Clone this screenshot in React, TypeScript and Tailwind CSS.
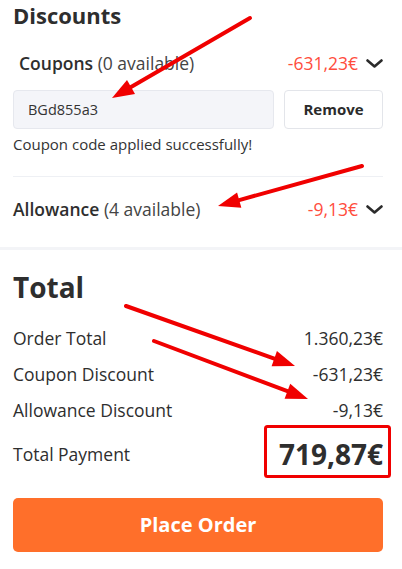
import { FC } from 'react';

const Chevron: FC = () => (
  <svg width="17" height="9" viewBox="0 0 17 9" className="shrink-0">
    <polyline points="1.5,1.5 8.5,7.5 15.5,1.5" fill="none" stroke="#2b2b2b" strokeWidth="2.6" strokeLinecap="round" strokeLinejoin="round" />
  </svg>
);

const Arrow: FC<{ x1: number; y1: number; x2: number; y2: number }> = ({ x1, y1, x2, y2 }) => {
  const a = Math.atan2(y2 - y1, x2 - x1);
  const len = 22;
  const w = 8;
  const bx = x2 - Math.cos(a) * len;
  const by = y2 - Math.sin(a) * len;
  const p1 = `${bx + Math.sin(a) * w},${by - Math.cos(a) * w}`;
  const p2 = `${bx - Math.sin(a) * w},${by + Math.cos(a) * w}`;
  return (
    <g>
      <line x1={x1} y1={y1} x2={bx} y2={by} stroke="#f00000" strokeWidth="4" strokeLinecap="round" />
      <polygon points={`${x2},${y2} ${p1} ${p2}`} fill="#f00000" />
    </g>
  );
};

const SummaryRow: FC<{ label: string; value: string }> = ({ label, value }) => (
  <div className="flex items-center justify-between h-[36px] text-[17.5px]">
    <span>{label}</span>
    <span>{value}</span>
  </div>
);

export default function App() {
  return (
    <div
      className="relative w-[402px] h-[569px] overflow-hidden bg-white text-[#2e2e2e]"
      style={{ fontFamily: '"Open Sans", "Noto Sans", sans-serif' }}
    >
      {/* Discounts */}
      <div className="pl-[13px] pr-[19px]">
        <h2 className="text-[22px] font-bold leading-[30px]">Discounts</h2>

        <div className="mt-[18px] h-[30px] pl-[6px] flex items-center justify-between text-[17.5px]">
          <div>
            <span className="font-semibold">Coupons</span>{' '}
            <span className="text-[#444]">(0 available)</span>
          </div>
          <div className="flex items-center gap-[8px]">
            <span className="text-[#ff4d3d]">-631,23€</span>
            <Chevron />
          </div>
        </div>

        <div className="mt-[12px] flex gap-[10px]">
          <div className="flex-1 h-[39px] rounded-[4px] border border-[#e6e8ee] bg-[#f4f5f9] flex items-center pl-[14px] text-[14.5px] text-[#333]">
            BGd855a3
          </div>
          <button className="w-[99px] h-[39px] rounded-[4px] border border-[#e3e5ea] bg-white text-[15px] font-bold text-[#2b2b2b]">
            Remove
          </button>
        </div>

        <p className="mt-[5px] text-[15px] leading-[20px] text-[#333]">Coupon code applied successfully!</p>

        <div className="mt-[22px] h-px bg-[#eef0f4]" />

        <div className="mt-[17px] mb-[23px] h-[30px] flex items-center justify-between text-[17.5px]">
          <div>
            <span className="font-semibold">Allowance</span>{' '}
            <span className="text-[#444]">(4 available)</span>
          </div>
          <div className="flex items-center gap-[8px]">
            <span className="text-[#ff4d3d]">-9,13€</span>
            <Chevron />
          </div>
        </div>
      </div>

      <div className="h-[3px] bg-[#f3f4f7]" />

      {/* Total */}
      <div className="pl-[13px] pr-[19px]">
        <h2 className="mt-[18px] text-[28px] font-bold leading-[38px]">Total</h2>

        <div className="mt-[14px]">
          <SummaryRow label="Order Total" value="1.360,23€" />
          <SummaryRow label="Coupon Discount" value="-631,23€" />
          <SummaryRow label="Allowance Discount" value="-9,13€" />
        </div>

        <div className="mt-[7px] flex items-center justify-between">
          <span className="text-[17.5px]">Total Payment</span>
          <span className="text-[28px] font-bold leading-[38px]">719,87€</span>
        </div>

        <button className="mt-[25px] w-full h-[54px] rounded-[5px] bg-[#ff6f2a] text-white text-[20px] font-bold">
          Place Order
        </button>
      </div>

      {/* annotations */}
      <svg className="absolute inset-0 pointer-events-none" width="402" height="569">
        <Arrow x1={250} y1={18} x2={112} y2={98} />
        <Arrow x1={362} y1={166} x2={218} y2={206} />
        <Arrow x1={126} y1={306} x2={295} y2={366} />
        <Arrow x1={154} y1={341} x2={308} y2={399} />
        <rect x="265.5" y="426.5" width="124" height="50" rx="2" fill="none" stroke="#f00000" strokeWidth="3" />
      </svg>
    </div>
  );
}
